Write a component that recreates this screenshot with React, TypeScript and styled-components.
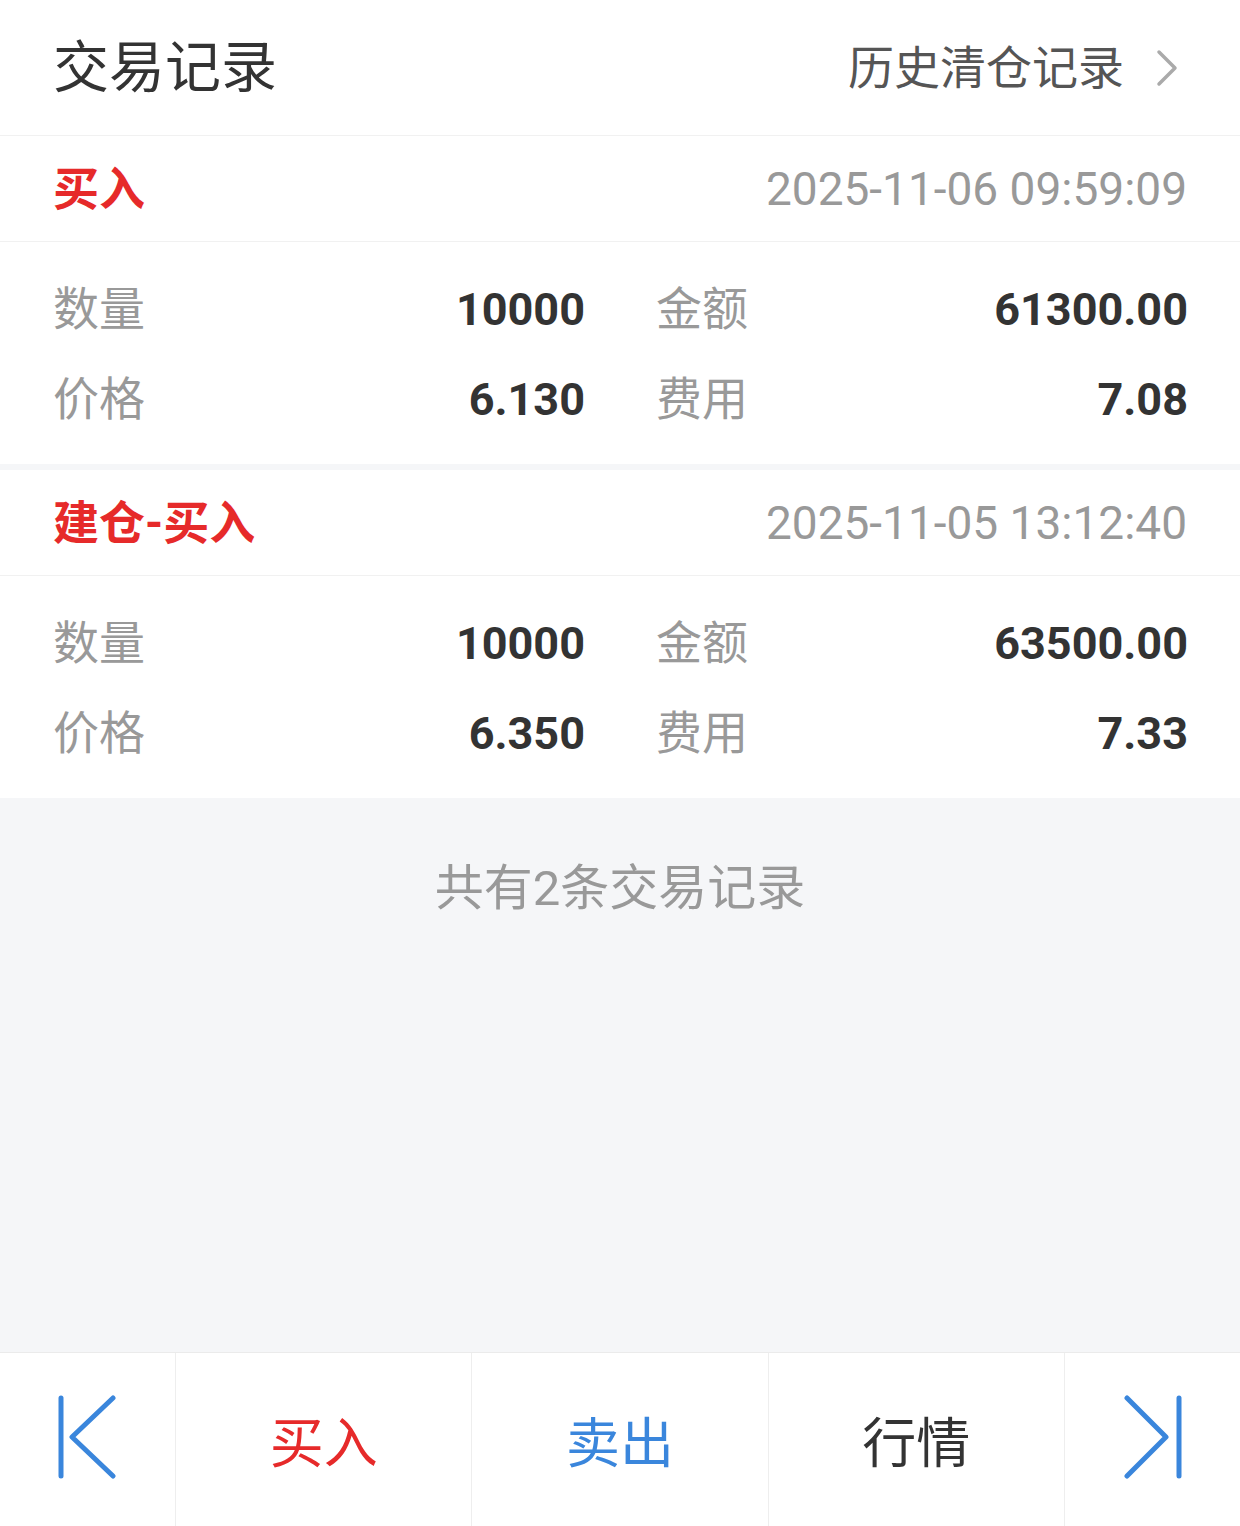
import React from "react";
import styled, { createGlobalStyle } from "styled-components";

const GlobalStyle = createGlobalStyle`
  html, body { margin: 0; padding: 0; background: #f5f6f8; }
  body { font-family: "Roboto", "Noto Sans CJK SC", sans-serif; }
  * { box-sizing: border-box; }
`;

const RED = "#e62a2a";
const BLUE = "#3a86dc";

const Page = styled.div`
  min-height: 100vh;
  display: flex;
  flex-direction: column;
  background: #f5f6f8;
`;

const Header = styled.header`
  height: 136px;
  display: flex;
  align-items: center;
  justify-content: space-between;
  padding: 0 62px 0 53px;
  background: #fff;
  border-bottom: 1px solid #f1f1f1;
`;

const Title = styled.h1`
  margin: 0;
  font-size: 56px;
  font-weight: 400;
  color: #333;
  line-height: 1;
`;

const HistoryLink = styled.a`
  display: flex;
  align-items: center;
  gap: 32px;
  font-size: 46px;
  color: #555;
  text-decoration: none;
  line-height: 1;
`;

const List = styled.div`
  display: flex;
  flex-direction: column;
  gap: 6px;
`;

const Card = styled.section`
  background: #fff;
`;

const CardHead = styled.div`
  height: 106px;
  display: flex;
  align-items: center;
  justify-content: space-between;
  padding: 0 53px 0 53px;
  border-bottom: 1px solid #f1f1f1;
`;

const Kind = styled.span`
  font-size: 46px;
  font-weight: 700;
  color: ${RED};
  line-height: 1;
`;

const Time = styled.span`
  font-size: 46px;
  color: #999;
  line-height: 1;
`;

const CardBody = styled.div`
  display: grid;
  grid-template-columns: 1fr 1fr;
  column-gap: 72px;
  padding: 22px 53px 20px 53px;
`;

const Pair = styled.div`
  height: 90px;
  display: flex;
  align-items: center;
  justify-content: space-between;
`;

const Label = styled.span`
  font-size: 46px;
  color: #999;
  line-height: 1;
`;

const Value = styled.span`
  font-size: 45px;
  font-weight: 700;
  color: #333;
  line-height: 1;
  margin-right: -1px;
`;

const Note = styled.div`
  padding-top: 63px;
  text-align: center;
  font-size: 49px;
  line-height: 56px;
  color: #999;
`;

const Spacer = styled.div`
  flex: 1;
`;

const BottomBar = styled.nav`
  height: 174px;
  display: grid;
  grid-template-columns: 175px 1fr 1fr 1fr 176px;
  background: #fff;
  border-top: 1px solid #ebebeb;
`;

const Cell = styled.button<{ $color?: string; $icon?: boolean }>`
  display: flex;
  align-items: center;
  justify-content: center;
  border: none;
  background: transparent;
  padding: ${(p) => (p.$icon ? "0 0 5px" : "10px 0 0")};
  font-family: inherit;
  font-size: 54px;
  color: ${(p) => p.$color || "#333"};
  line-height: 1;
  & + & {
    border-left: 1px solid #eeeeee;
  }
`;

const Chevron = () => (
  <svg width="22" height="38" viewBox="0 0 22 38" fill="none">
    <polyline points="3,3 19,19 3,35" stroke="#aaa" strokeWidth="3.5" strokeLinecap="round" strokeLinejoin="round" />
  </svg>
);

const FirstIcon = () => (
  <svg width="62" height="84" viewBox="0 0 62 84" fill="none">
    <line x1="4" y1="3" x2="4" y2="81" stroke={BLUE} strokeWidth="5" strokeLinecap="round" />
    <polyline points="56,3 15,42 56,81" stroke={BLUE} strokeWidth="5" strokeLinecap="round" strokeLinejoin="round" />
  </svg>
);

const LastIcon = () => (
  <svg width="62" height="84" viewBox="0 0 62 84" fill="none">
    <polyline points="5,3 44,42 5,81" stroke={BLUE} strokeWidth="5" strokeLinecap="round" strokeLinejoin="round" />
    <line x1="57" y1="3" x2="57" y2="81" stroke={BLUE} strokeWidth="5" strokeLinecap="round" />
  </svg>
);

type Trade = {
  kind: string;
  time: string;
  qty: string;
  amount: string;
  price: string;
  fee: string;
};

const trades: Trade[] = [
  { kind: "买入", time: "2025-11-06 09:59:09", qty: "10000", amount: "61300.00", price: "6.130", fee: "7.08" },
  { kind: "建仓-买入", time: "2025-11-05 13:12:40", qty: "10000", amount: "63500.00", price: "6.350", fee: "7.33" },
];

export default function App() {
  return (
    <Page>
      <GlobalStyle />
      <Header>
        <Title>交易记录</Title>
        <HistoryLink>
          历史清仓记录
          <Chevron />
        </HistoryLink>
      </Header>
      <List>
        {trades.map((t) => (
          <Card key={t.time}>
            <CardHead>
              <Kind>{t.kind}</Kind>
              <Time>{t.time}</Time>
            </CardHead>
            <CardBody>
              <Pair>
                <Label>数量</Label>
                <Value>{t.qty}</Value>
              </Pair>
              <Pair>
                <Label>金额</Label>
                <Value>{t.amount}</Value>
              </Pair>
              <Pair>
                <Label>价格</Label>
                <Value>{t.price}</Value>
              </Pair>
              <Pair>
                <Label>费用</Label>
                <Value>{t.fee}</Value>
              </Pair>
            </CardBody>
          </Card>
        ))}
      </List>
      <Note>共有2条交易记录</Note>
      <Spacer />
      <BottomBar>
        <Cell $icon aria-label="first"><FirstIcon /></Cell>
        <Cell $color={RED}>买入</Cell>
        <Cell $color={BLUE}>卖出</Cell>
        <Cell $color="#333">行情</Cell>
        <Cell $icon aria-label="last"><LastIcon /></Cell>
      </BottomBar>
    </Page>
  );
}
